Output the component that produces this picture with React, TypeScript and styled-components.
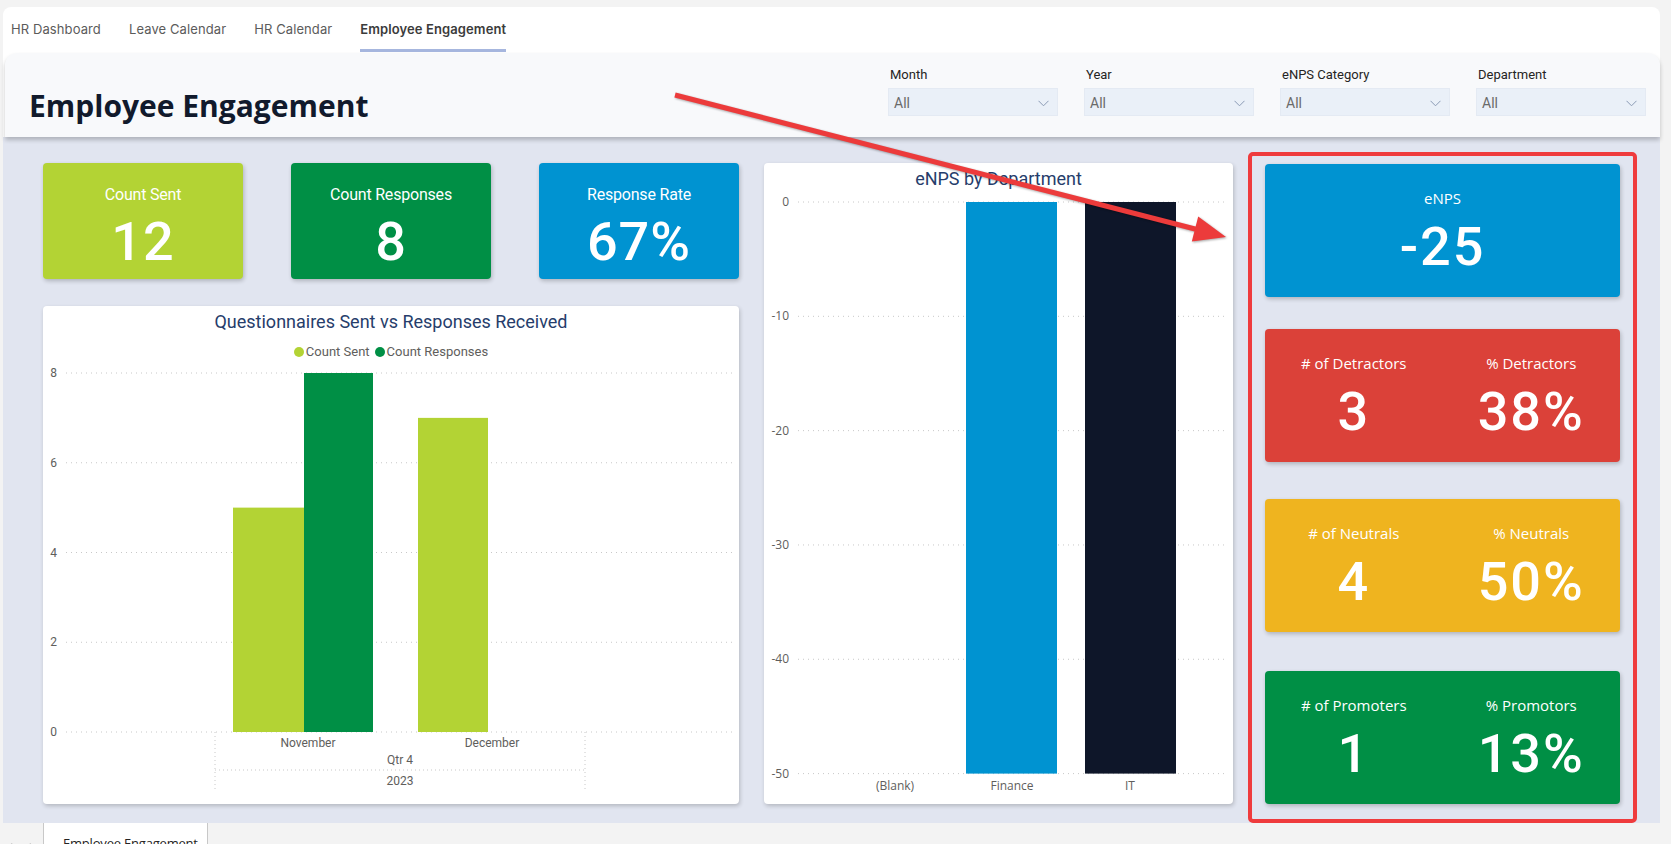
import React from "react";
import styled, { createGlobalStyle } from "styled-components";

const DIN = `"Roboto", "Liberation Sans", sans-serif`;
const SEGOE = `"Open Sans", "Noto Sans", sans-serif`;
const POPPINS = `"Inter", "Lato", sans-serif`;

const GlobalStyle = createGlobalStyle`
  html, body { margin: 0; padding: 0; background: #f3f3f3; }
  body { font-family: ${SEGOE}; overflow: hidden; }
  #root { width: 1671px; height: 844px; }
`;

const Page = styled.div`
  position: relative;
  width: 1671px;
  height: 844px;
  display: flex;
  flex-direction: column;
`;

const Frame = styled.div`
  margin: 7px 11px 0 3px;
  background: #ffffff;
  border-radius: 8px 8px 0 0;
  display: flex;
  flex-direction: column;
`;

const TabBar = styled.nav`
  height: 46px;
  display: flex;
  gap: 28px;
  padding-left: 8px;
`;

const Tab = styled.div<{ $active?: boolean }>`
  box-sizing: border-box;
  height: 45px;
  padding-top: 2px;
  display: flex;
  align-items: center;
  font-family: ${POPPINS};
  font-size: 13px;
  letter-spacing: 0.1px;
  font-weight: ${(p) => (p.$active ? 600 : 400)};
  color: ${(p) => (p.$active ? "#3b3b3b" : "#5b5b5b")};
  border-bottom: 3px solid ${(p) => (p.$active ? "#a6b6de" : "transparent")};
`;

const Header = styled.header`
  margin-left: 2px;
  height: 84px;
  background: #f8f9fb;
  border-radius: 12px 12px 0 0;
  box-shadow: 0 3px 4px rgba(0, 0, 0, 0.22);
  position: relative;
  z-index: 1;
  display: flex;
  justify-content: space-between;
`;

const Title = styled.h1`
  margin: 0;
  align-self: flex-end;
  padding: 0 0 13px 24px;
  font: 700 30px/36px ${SEGOE};
  color: #111a2c;
`;

const Filters = styled.div`
  display: flex;
  gap: 26px;
  padding: 14px 14px 0 0;
`;

const Filter = styled.div`
  width: 170px;
  display: flex;
  flex-direction: column;
`;

const FilterLabel = styled.div`
  font: 400 13px/16px ${DIN};
  color: #252423;
  padding-left: 2px;
  margin-bottom: 5px;
`;

const Dropdown = styled.div`
  box-sizing: border-box;
  height: 28px;
  background: #eaf0f8;
  border: 1px solid #e4eaf3;
  display: flex;
  align-items: center;
  justify-content: space-between;
  padding: 2px 8px 0 5px;
  font: 400 14px/18px ${DIN};
  color: #6a6a6a;
`;

const Main = styled.main`
  height: 686px;
  box-sizing: border-box;
  background: #e1e5f0;
  display: flex;
  padding: 26px 0 19px 40px;
`;

const LeftColumn = styled.div`
  width: 696px;
  display: flex;
  flex-direction: column;
`;

const KpiRow = styled.div`
  display: grid;
  grid-template-columns: repeat(3, 1fr);
  gap: 48px;
  height: 116px;
`;

const KpiCard = styled.div<{ $bg: string }>`
  border-radius: 4px;
  background: ${(p) => p.$bg};
  box-shadow: 1px 2px 4px rgba(0, 0, 0, 0.22);
  display: flex;
  flex-direction: column;
  align-items: center;
  padding-top: 22px;
  color: #ffffff;
`;

const KpiLabel = styled.div`
  font: 400 16px/20px ${DIN};
  letter-spacing: -0.2px;
`;

const KpiValue = styled.div`
  margin-top: 10px;
  font: 500 54px/54px ${DIN};
  letter-spacing: 1px;
`;

const Panel = styled.section`
  background: #ffffff;
  border-radius: 4px;
  box-shadow: 1px 2px 4px rgba(0, 0, 0, 0.2);
  display: flex;
  flex-direction: column;
`;

const ChartPanel = styled(Panel)`
  margin-top: 27px;
  flex: 1;
`;

const DeptPanel = styled(Panel)`
  margin-left: 25px;
  width: 469px;
`;

const ChartTitle = styled.h2`
  margin: 0;
  padding-top: 4px;
  font: 400 18px/24px ${DIN};
  color: #263d6b;
  text-align: center;
`;

const Legend = styled.div`
  margin-top: 8px;
  height: 20px;
  display: flex;
  justify-content: center;
  align-items: center;
  gap: 5px;
`;

const LegendItem = styled.div`
  display: flex;
  align-items: center;
  gap: 2px;
  font: 400 13px/20px ${DIN};
  color: #605e5c;
`;

const Dot = styled.span<{ $color: string }>`
  width: 10px;
  height: 10px;
  border-radius: 50%;
  background: ${(p) => p.$color};
`;

const ChartSvg = styled.svg`
  display: block;
`;

const Highlight = styled.div`
  margin: -11px 0 -19px 15px;
  width: 389px;
  box-sizing: border-box;
  border: 4px solid #ef3b3d;
  border-radius: 5px;
  padding: 8px 13px 16px;
  display: flex;
  flex-direction: column;
`;

const BigCard = styled.div<{ $bg: string; $gap?: number }>`
  height: 133px;
  flex-shrink: 0;
  margin-top: ${(p) => p.$gap ?? 0}px;
  border-radius: 4px;
  background: ${(p) => p.$bg};
  box-shadow: 1px 2px 4px rgba(0, 0, 0, 0.22);
  display: flex;
  color: #ffffff;
`;

const Metric = styled.div`
  flex: 1;
  display: flex;
  flex-direction: column;
  align-items: center;
  padding-top: 24px;
`;

const MetricLabel = styled.div`
  font: 400 15px/20px ${SEGOE};
`;

const MetricValue = styled.div`
  margin-top: 12px;
  font: 500 54px/54px ${DIN};
  letter-spacing: 2px;
`;

const BottomBar = styled.footer`
  flex: 1;
  background: #f3f3f3;
  display: flex;
`;

const NavArrows = styled.div`
  width: 43px;
  display: flex;
  align-items: flex-end;
  padding: 0 0 0 5px;
  box-sizing: border-box;
  gap: 16px;
`;

const PageTab = styled.div`
  width: 165px;
  box-sizing: border-box;
  background: #ffffff;
  border-left: 1px solid #c8c8c8;
  border-right: 1px solid #c8c8c8;
  padding: 11px 0 0 19px;
  font: 400 13px/18px ${SEGOE};
  letter-spacing: -0.2px;
  color: #252423;
  white-space: nowrap;
`;

const Overlay = styled.svg`
  position: absolute;
  left: 0;
  top: 0;
  pointer-events: none;
  z-index: 10;
  filter: drop-shadow(1px 1px 1px rgba(0, 0, 0, 0.35));
`;

const Chevron = () => (
  <svg width="11" height="7" viewBox="0 0 11 7">
    <polyline points="0.5,0.8 5.5,5.8 10.5,0.8" fill="none" stroke="#8a9ab4" strokeWidth="1" />
  </svg>
);

const GRID = "#c8c8c8";

const SentChart = () => {
  const y = (v: number) => 370 - v * 44.875;
  const ticks = [8, 6, 4, 2, 0];
  return (
    <ChartSvg width={696} height={441} viewBox="0 0 696 441">
      {ticks.map((t) => (
        <g key={t}>
          <line x1={23} x2={689} y1={y(t)} y2={y(t)} stroke={GRID} strokeDasharray="1 4" />
          <text x={14} y={y(t) + 4} textAnchor="end" fontFamily={DIN} fontSize={12} fill="#605e5c">
            {t}
          </text>
        </g>
      ))}
      <rect x={190} y={y(5)} width={71} height={370 - y(5)} fill="#b3d334" />
      <rect x={261} y={y(8)} width={69} height={370 - y(8)} fill="#008f45" />
      <rect x={375} y={y(7)} width={70} height={370 - y(7)} fill="#b3d334" />
      <line x1={172} x2={172} y1={370} y2={428} stroke={GRID} strokeDasharray="1 3" />
      <line x1={542} x2={542} y1={370} y2={428} stroke={GRID} strokeDasharray="1 3" />
      <line x1={172} x2={542} y1={408} y2={408} stroke={GRID} strokeDasharray="1 3" />
      <g fontFamily={DIN} fontSize={12} fill="#605e5c" textAnchor="middle">
        <text x={265} y={385}>November</text>
        <text x={449} y={385}>December</text>
        <text x={357} y={402}>Qtr 4</text>
        <text x={357} y={423}>2023</text>
      </g>
    </ChartSvg>
  );
};

const DeptChart = () => {
  const y = (v: number) => 11 - v * 11.432;
  const ticks = [0, -10, -20, -30, -40, -50];
  return (
    <ChartSvg width={469} height={613} viewBox="0 0 469 613">
      {ticks.map((t) => (
        <g key={t}>
          <line x1={34} x2={464} y1={y(t)} y2={y(t)} stroke={GRID} strokeDasharray="1 4" />
          <text x={25} y={y(t) + 4} textAnchor="end" fontFamily={SEGOE} fontSize={12} fill="#605e5c">
            {t}
          </text>
        </g>
      ))}
      <rect x={202} y={y(0)} width={91} height={y(-50) - y(0)} fill="#0093d1" />
      <rect x={321} y={y(0)} width={91} height={y(-50) - y(0)} fill="#0e1629" />
      <g fontFamily={SEGOE} fontSize={12} fill="#605e5c" textAnchor="middle">
        <text x={131} y={599}>(Blank)</text>
        <text x={248} y={599}>Finance</text>
        <text x={366} y={599}>IT</text>
      </g>
    </ChartSvg>
  );
};

const filters = ["Month", "Year", "eNPS Category", "Department"];

export default function App() {
  return (
    <Page>
      <GlobalStyle />
      <Frame>
        <TabBar>
          <Tab>HR Dashboard</Tab>
          <Tab>Leave Calendar</Tab>
          <Tab>HR Calendar</Tab>
          <Tab $active>Employee Engagement</Tab>
        </TabBar>
        <Header>
          <Title>Employee Engagement</Title>
          <Filters>
            {filters.map((f) => (
              <Filter key={f}>
                <FilterLabel>{f}</FilterLabel>
                <Dropdown>
                  <span>All</span>
                  <Chevron />
                </Dropdown>
              </Filter>
            ))}
          </Filters>
        </Header>
        <Main>
          <LeftColumn>
            <KpiRow>
              <KpiCard $bg="#b3d334">
                <KpiLabel>Count Sent</KpiLabel>
                <KpiValue>12</KpiValue>
              </KpiCard>
              <KpiCard $bg="#008f45">
                <KpiLabel>Count Responses</KpiLabel>
                <KpiValue>8</KpiValue>
              </KpiCard>
              <KpiCard $bg="#0093d1">
                <KpiLabel>Response Rate</KpiLabel>
                <KpiValue>67%</KpiValue>
              </KpiCard>
            </KpiRow>
            <ChartPanel>
              <ChartTitle>Questionnaires Sent vs Responses Received</ChartTitle>
              <Legend>
                <LegendItem>
                  <Dot $color="#b3d334" />
                  Count Sent
                </LegendItem>
                <LegendItem>
                  <Dot $color="#008f45" />
                  Count Responses
                </LegendItem>
              </Legend>
              <SentChart />
            </ChartPanel>
          </LeftColumn>
          <DeptPanel>
            <ChartTitle>eNPS by Department</ChartTitle>
            <DeptChart />
          </DeptPanel>
          <Highlight>
            <BigCard $bg="#0093d1">
              <Metric>
                <MetricLabel>eNPS</MetricLabel>
                <MetricValue>-25</MetricValue>
              </Metric>
            </BigCard>
            <BigCard $bg="#db4139" $gap={32}>
              <Metric>
                <MetricLabel># of Detractors</MetricLabel>
                <MetricValue>3</MetricValue>
              </Metric>
              <Metric>
                <MetricLabel>% Detractors</MetricLabel>
                <MetricValue>38%</MetricValue>
              </Metric>
            </BigCard>
            <BigCard $bg="#efb41f" $gap={37}>
              <Metric>
                <MetricLabel># of Neutrals</MetricLabel>
                <MetricValue>4</MetricValue>
              </Metric>
              <Metric>
                <MetricLabel>% Neutrals</MetricLabel>
                <MetricValue>50%</MetricValue>
              </Metric>
            </BigCard>
            <BigCard $bg="#008f45" $gap={39}>
              <Metric>
                <MetricLabel># of Promoters</MetricLabel>
                <MetricValue>1</MetricValue>
              </Metric>
              <Metric>
                <MetricLabel>% Promotors</MetricLabel>
                <MetricValue>13%</MetricValue>
              </Metric>
            </BigCard>
          </Highlight>
        </Main>
      </Frame>
      <BottomBar>
        <NavArrows>
          <svg width="8" height="9" viewBox="0 0 8 9">
            <polygon points="7,0.5 7,8.5 0.8,4.5" fill="none" stroke="#c4c4c4" />
          </svg>
          <svg width="8" height="9" viewBox="0 0 8 9">
            <polygon points="1,0.5 1,8.5 7.2,4.5" fill="none" stroke="#c4c4c4" />
          </svg>
        </NavArrows>
        <PageTab>Employee Engagement</PageTab>
      </BottomBar>
      <Overlay width={1671} height={844} viewBox="0 0 1671 844">
        <line x1={675} y1={95} x2={1197} y2={229.5} stroke="#ec3b3b" strokeWidth={5} strokeLinecap="butt" />
        <polygon points="1226,237 1191.8,241.6 1198.2,216.4" fill="#ec3b3b" />
      </Overlay>
    </Page>
  );
}
